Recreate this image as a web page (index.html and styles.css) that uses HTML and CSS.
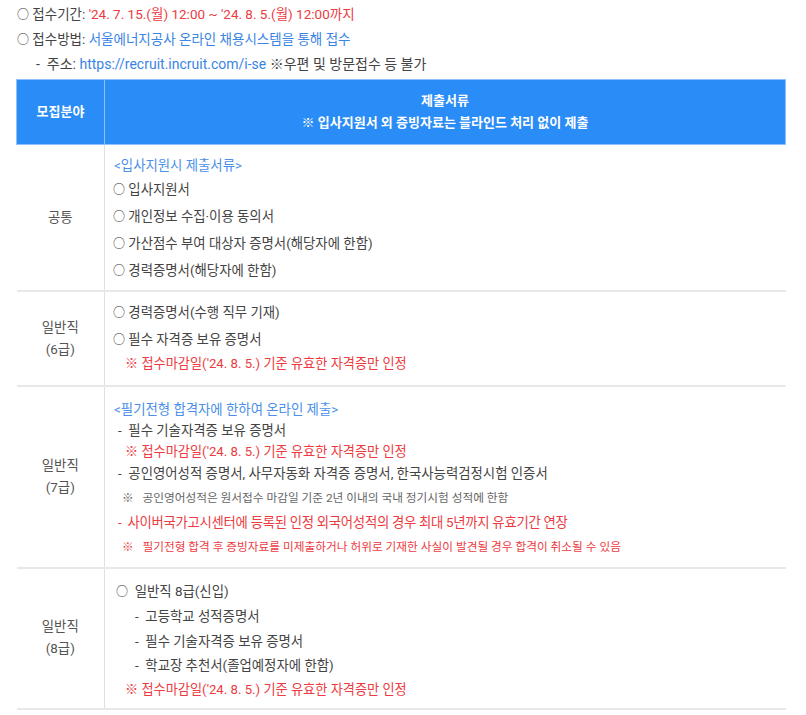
FILE: index.html
```html
<!DOCTYPE html>
<html lang="ko">
<head>
  <meta charset="UTF-8" />
  <meta name="viewport" content="width=device-width, initial-scale=1.0"/>
  <title>접수 안내</title>
  <link rel="stylesheet" href="styles.css">
</head>
<body>
  <div class="info">
    <p><span class="o">○</span> 접수기간: <span class="red">'24. 7. 15.(월) 12:00 ~ '24. 8. 5.(월) 12:00까지</span></p>
    <p><span class="o">○</span> 접수방법: <span class="blue">서울에너지공사 온라인 채용시스템을 통해 접수</span></p>
    <p class="addr">-&nbsp; 주소: <span class="blue">https://recruit.incruit.com/i-se</span> ※우편 및 방문접수 등 불가</p>
  </div>

  <table class="docs">
    <thead>
      <tr>
        <th class="col-field">모집분야</th>
        <th>제출서류<br>※ 입사지원서 외 증빙자료는 블라인드 처리 없이 제출</th>
      </tr>
    </thead>
    <tbody>
      <tr class="row-common">
        <td class="col-field">공통</td>
        <td class="list">
          <p class="title">&lt;입사지원시 제출서류&gt;</p>
          <p class="item"><span class="o">○</span> 입사지원서</p>
          <p class="item"><span class="o">○</span> 개인정보 수집·이용 동의서</p>
          <p class="item"><span class="o">○</span> 가산점수 부여 대상자 증명서(해당자에 한함)</p>
          <p class="item"><span class="o">○</span> 경력증명서(해당자에 한함)</p>
        </td>
      </tr>
      <tr class="row-6">
        <td class="col-field">일반직<br>(6급)</td>
        <td class="list">
          <p class="item"><span class="o">○</span> 경력증명서(수행 직무 기재)</p>
          <p class="item"><span class="o">○</span> 필수 자격증 보유 증명서</p>
          <p class="note red">※ 접수마감일('24. 8. 5.) 기준 유효한 자격증만 인정</p>
        </td>
      </tr>
      <tr class="row-7">
        <td class="col-field">일반직<br>(7급)</td>
        <td class="list">
          <p class="title">&lt;필기전형 합격자에 한하여 온라인 제출&gt;</p>
          <p class="dash">-&nbsp; 필수 기술자격증 보유 증명서</p>
          <p class="note red">※ 접수마감일('24. 8. 5.) 기준 유효한 자격증만 인정</p>
          <p class="dash">-&nbsp; 공인영어성적 증명서, 사무자동화 자격증 증명서, 한국사능력검정시험 인증서</p>
          <p class="small">※&nbsp;&nbsp; 공인영어성적은 원서접수 마감일 기준 2년 이내의 국내 정기시험 성적에 한함</p>
          <p class="dash red">-&nbsp; 사이버국가고시센터에 등록된 인정 외국어성적의 경우 최대 5년까지 유효기간 연장</p>
          <p class="small red">※&nbsp;&nbsp; 필기전형 합격 후 증빙자료를 미제출하거나 허위로 기재한 사실이 발견될 경우 합격이 취소될 수 있음</p>
        </td>
      </tr>
      <tr class="row-8">
        <td class="col-field">일반직<br>(8급)</td>
        <td class="list">
          <p class="item"><span class="o">○</span>&nbsp; 일반직 8급(신입)</p>
          <p class="sub">-&nbsp; 고등학교 성적증명서</p>
          <p class="sub">-&nbsp; 필수 기술자격증 보유 증명서</p>
          <p class="sub">-&nbsp; 학교장 추천서(졸업예정자에 한함)</p>
          <p class="note red">※ 접수마감일('24. 8. 5.) 기준 유효한 자격증만 인정</p>
        </td>
      </tr>
    </tbody>
  </table>
</body>
</html>
```

FILE: styles.css
```css
body {
  margin: 0;
  font-family: Roboto, "Noto Sans CJK KR", sans-serif;
  color: #444;
  background-color: #fff;
}

p {
  margin: 0;
}

.red {
  color: #ec3b42;
}

.blue {
  color: #3a85e3;
}

.o {
  font-size: 12px;
  line-height: 0;
  color: #333;
}

.info {
  padding: 2px 0 0 17px;
  font-size: 13.5px;
}

.info p {
  line-height: 25px;
}

.info .addr {
  padding-left: 19px;
  font-size: 14px;
}

.docs {
  width: 770px;
  margin: 2px 0 0 16px;
  border-collapse: collapse;
  font-size: 13.4px;
}

.docs th {
  height: 64px;
  padding: 0;
  background-color: #2a8cf6;
  color: #fff;
  font-size: 13px;
  font-weight: bold;
  line-height: 22px;
  text-align: center;
  border: 1px solid #8fc2f8;
}

.docs td {
  padding: 0;
  border-bottom: 2px solid #e8e8e8;
  border-right: 1px solid #e0e0e0;
}

.docs td:last-child {
  border-right: none;
}

.col-field {
  width: 87px;
  text-align: center;
  line-height: 22px;
  color: #555;
}

.list {
  vertical-align: top;
}

.docs .list {
  padding-left: 8px;
  padding-right: 8px;
}

.list .title {
  padding-left: 1px;
  color: #4a8fe8;
  line-height: 21px;
}

.list .item {
  line-height: 27px;
}

.list .dash {
  padding-left: 5px;
  line-height: 21px;
}

.list .sub {
  padding-left: 22px;
  line-height: 24.5px;
}

.list .note {
  padding-left: 12px;
  font-size: 13.2px;
  line-height: 22px;
}

.list .small {
  padding-left: 9px;
  margin-top: 2px;
  font-size: 11.7px;
  line-height: 24px;
  color: #666;
}

.list .small.red {
  margin-top: 0;
  color: #ec3b42;
}

.row-common .list {
  padding-top: 10px;
  padding-bottom: 6px;
}

.row-6 .list {
  padding-top: 7px;
  padding-bottom: 10px;
}

.row-7 .list {
  padding-top: 12px;
  padding-bottom: 8px;
}

.row-7 .dash.red {
  line-height: 25px;
  letter-spacing: -0.3px;
}

.row-8 .list {
  padding-top: 9px;
  padding-bottom: 7px;
}

.row-8 .item {
  padding-left: 3px;
}
```
